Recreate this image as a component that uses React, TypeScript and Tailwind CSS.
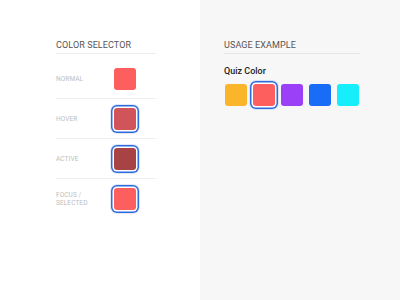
import React from 'react';

type StateRow = {
  label: string[];
  color: string;
  ring: boolean;
};

const ROWS: StateRow[] = [
  { label: ['NORMAL'], color: 'bg-[#fd5f5f]', ring: false },
  { label: ['HOVER'], color: 'bg-[#d0545a]', ring: true },
  { label: ['ACTIVE'], color: 'bg-[#a84345]', ring: true },
  { label: ['FOCUS /', 'SELECTED'], color: 'bg-[#fd5f5f]', ring: true },
];

const QUIZ = [
  { color: 'bg-[#fbb52a]', ring: false },
  { color: 'bg-[#fd5f5f]', ring: true },
  { color: 'bg-[#9b40f6]', ring: false },
  { color: 'bg-[#196cf6]', ring: false },
  { color: 'bg-[#16eefb]', ring: false },
];

function Swatch({ color, ring }: { color: string; ring: boolean }) {
  return (
    <div
      className={`w-[22px] h-[22px] rounded-[3px] ${color} ${
        ring
          ? 'shadow-[0_0_0_1.5px_#ffffff,0_0_0_3px_#2f6bdc,0_0_0_4px_rgba(80,130,230,0.18)]'
          : ''
      }`}
    />
  );
}

export default function App() {
  return (
    <div
      className="flex w-[400px] h-[300px] bg-white"
      style={{ fontFamily: 'Roboto, "Liberation Sans", sans-serif' }}
    >
      {/* left: states */}
      <div className="w-[200px] h-full bg-white pl-[56px] pr-[44px] pt-[39px]">
        <div className="text-[9px] leading-[12px] text-[#555] tracking-[0.1px] pb-[2px] border-b border-[#ececec]">
          COLOR SELECTOR
        </div>
        <div className="mt-[5px]">
          {ROWS.map((row, i) => (
            <div
              key={i}
              className={`flex items-center h-[40px] ${
                i < ROWS.length - 1 ? 'border-b border-[#efefef]' : ''
              }`}
            >
              <div className="w-[58px] text-[6.5px] leading-[8px] text-[#bdbdbd] tracking-[0.1px]">
                {row.label.map((l) => (
                  <div key={l}>{l}</div>
                ))}
              </div>
              <Swatch color={row.color} ring={row.ring} />
            </div>
          ))}
        </div>
      </div>

      {/* right: usage */}
      <div className="flex-1 h-full bg-[#f7f7f7] pl-[24px] pr-[40px] pt-[39px]">
        <div className="text-[9px] leading-[12px] text-[#555] tracking-[0.1px] pb-[2px] border-b border-[#e6e6e6]">
          USAGE EXAMPLE
        </div>
        <div className="mt-[11px] text-[9px] leading-[12px] font-medium text-[#222]">
          Quiz Color
        </div>
        <div className="flex gap-[6px] mt-[7px] pl-[1px]">
          {QUIZ.map((q, i) => (
            <Swatch key={i} color={q.color} ring={q.ring} />
          ))}
        </div>
      </div>
    </div>
  );
}
